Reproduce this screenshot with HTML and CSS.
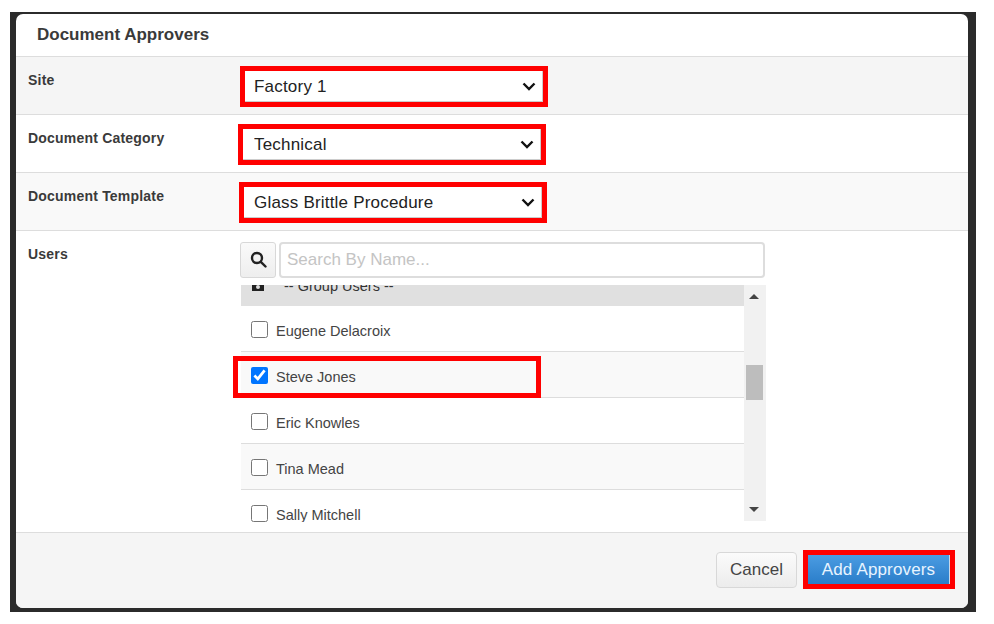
FILE: index.html
```html
<!DOCTYPE html>
<html lang="en">
<head>
  <meta charset="UTF-8" />
  <title>Document Approvers</title>
  <link rel="stylesheet" href="styles.css">
</head>
<body>
  <div class="backdrop">
    <div class="modal">
      <div class="modal-title">Document Approvers</div>

      <div class="row row-site">
        <label class="row-label">Site</label>
        <div class="red-box box-site">
          <select class="field"><option>Factory 1</option></select>
        </div>
      </div>

      <div class="row row-category">
        <label class="row-label">Document Category</label>
        <div class="red-box box-category">
          <select class="field"><option>Technical</option></select>
        </div>
      </div>

      <div class="row row-template">
        <label class="row-label">Document Template</label>
        <div class="red-box box-template">
          <select class="field"><option>Glass Brittle Procedure</option></select>
        </div>
      </div>

      <div class="row row-users">
        <label class="row-label">Users</label>
        <div class="users">
          <div class="search">
            <button class="search-btn" type="button">
              <svg width="17" height="17" viewBox="0 0 17 17" fill="none" stroke="#222" stroke-width="2.4">
                <circle cx="7" cy="7" r="5"/>
                <path d="M10.8 10.8 L15.5 15.5" stroke-linecap="round"/>
              </svg>
            </button>
            <input class="search-input" type="text" placeholder="Search By Name...">
          </div>

          <div class="list-wrap">
            <div class="list">
              <div class="list-inner">
                <div class="group-row">
                  <svg class="group-icon" width="12" height="12" viewBox="0 0 12 12"><path fill="#222" d="M0 2h4l1-2h2l1 2h4v10H0z"/><circle cx="6" cy="8" r="2" fill="#ddd"/></svg>
                  <span>-- Group Users --</span>
                </div>
                <label class="user"><input type="checkbox"><span>Eugene Delacroix</span></label>
                <label class="user alt"><input type="checkbox" checked><span>Steve Jones</span><i class="user-mark"></i></label>
                <label class="user"><input type="checkbox"><span>Eric Knowles</span></label>
                <label class="user alt"><input type="checkbox"><span>Tina Mead</span></label>
                <label class="user"><input type="checkbox"><span>Sally Mitchell</span></label>
              </div>
            </div>
            <div class="scrollbar">
              <div class="arrow-up"></div>
              <div class="thumb"></div>
              <div class="arrow-down"></div>
            </div>
          </div>
        </div>
      </div>

      <div class="modal-footer">
        <button class="btn-cancel" type="button">Cancel</button>
        <div class="red-box box-add">
          <button class="btn-add" type="button">Add Approvers</button>
        </div>
      </div>
    </div>
  </div>
</body>
</html>
```

FILE: styles.css
```css
* {
  box-sizing: border-box;
}

body {
  background-color: #fff;
  color: #333;
  font-family: 'Liberation Sans', Arial, sans-serif;
  margin: 0;
}

.backdrop {
  width: 966px;
  height: 600px;
  margin: 12px 0 0 10px;
  padding: 2px 8px 4px 6px;
  background-color: #2b2b2b;
}

.modal {
  height: 594px;
  background: #fff;
  border-radius: 7px;
  overflow: hidden;
}

.modal-title {
  height: 43px;
  padding: 11px 0 0 21px;
  font-size: 17px;
  font-weight: bold;
  color: #3a3a3a;
  border-bottom: 1px solid #ddd;
}

.row {
  display: grid;
  grid-template-columns: 224px 1fr;
  height: 58px;
  border-bottom: 1px solid #ddd;
}

.row-site {
  background-color: #f5f5f5;
}

.row-template {
  background-color: #f9f9f9;
}

.row-users {
  height: 302px;
  border-bottom: 1px solid #ddd;
}

.row-label {
  padding: 15px 0 0 12px;
  font-size: 14px;
  font-weight: bold;
  letter-spacing: 0.2px;
  color: #3a3a3a;
}

.red-box {
  border: 5px solid #f00;
}

.box-site,
.box-category,
.box-template {
  width: 308px;
  height: 41px;
  margin-top: 9px;
}

.box-category {
  margin-left: -2px;
}

.box-template {
  margin-left: -1px;
}

.field {
  display: block;
  width: 100%;
  height: 100%;
  padding: 0 0 0 9px;
  appearance: none;
  background: #fff url("data:image/svg+xml,%3Csvg xmlns='http://www.w3.org/2000/svg' width='14' height='9' viewBox='0 0 14 9'%3E%3Cpath d='M1.5 1.5 7 7l5.5-5.5' fill='none' stroke='%23111' stroke-width='2.4'/%3E%3C/svg%3E") no-repeat right 6px center;
  border: none;
  border-right: 1px solid #ccc;
  border-bottom: 1px solid #ccc;
  font-family: 'Liberation Sans', Arial, sans-serif;
  font-size: 17px;
  letter-spacing: 0.2px;
  color: #222;
}

.box-category .field {
  padding-left: 11px;
}

.box-template .field {
  padding-left: 10px;
}

.users {
  padding-top: 11px;
}

.search {
  display: flex;
  gap: 3px;
  width: 525px;
  height: 36px;
}

.search-btn {
  width: 36px;
  height: 36px;
  padding: 2px 0 0;
  background: linear-gradient(#fafafa, #eee);
  border: 1px solid #d8d8d8;
  border-radius: 3px;
}

.search-input {
  flex: 1;
  padding: 0 6px;
  background-color: #fff;
  border: 2px solid #ddd;
  border-radius: 4px;
  font-family: 'Liberation Sans', Arial, sans-serif;
  font-size: 17px;
}

.search-input::placeholder {
  color: #c4c4c4;
}

.list-wrap {
  display: flex;
  width: 525px;
  height: 236px;
  margin: 7px 0 0 1px;
}

.list {
  flex: 1;
  clip-path: inset(0 -10px -1px -10px);
}

.list-inner {
  margin-top: -18px;
}

.group-row {
  display: flex;
  gap: 20px;
  height: 39px;
  padding: 11px 0 0 11px;
  background-color: #e0e0e0;
  font-size: 14.5px;
}

.group-icon {
  margin-top: 1px;
}

.user {
  position: relative;
  display: flex;
  align-items: center;
  gap: 7px;
  height: 46px;
  padding-left: 10px;
  border-bottom: 1px solid #ddd;
  font-size: 14.5px;
  color: #444;
}

.user span {
  padding-top: 5px;
}

.user.alt {
  background-color: #f9f9f9;
}

.user input {
  width: 17px;
  height: 17px;
  margin: 1px 1px 0 0;
}

.user-mark {
  position: absolute;
  left: -8px;
  top: 4px;
  width: 308px;
  height: 42px;
  border: 5px solid #f00;
}

.scrollbar {
  position: relative;
  width: 22px;
  background-color: #f1f1f1;
}

.arrow-up,
.arrow-down {
  position: absolute;
  left: 5px;
  width: 0;
  height: 0;
  border-left: 5px solid transparent;
  border-right: 5px solid transparent;
}

.arrow-up {
  top: 9px;
  border-bottom: 5px solid #444;
}

.arrow-down {
  bottom: 9px;
  border-top: 5px solid #444;
}

.thumb {
  position: absolute;
  left: 2px;
  top: 80px;
  width: 17px;
  height: 35px;
  background-color: #bdbdbd;
}

.modal-footer {
  display: flex;
  justify-content: flex-end;
  align-items: center;
  gap: 6px;
  height: 75px;
  padding: 0 13px 2px 0;
  background-color: #f5f5f5;
}

.btn-cancel {
  width: 81px;
  height: 36px;
  background: linear-gradient(#fbfbfb, #ececec);
  border: 1px solid #d8d8d8;
  border-radius: 4px;
  font-family: 'Liberation Sans', Arial, sans-serif;
  font-size: 17px;
  color: #444;
}

.box-add {
  width: 152px;
  height: 39px;
}

.btn-add {
  display: block;
  width: 100%;
  height: 100%;
  background: linear-gradient(#4b9ce2, #2a7dc9);
  border: none;
  border-right: 1px solid #c8d8e8;
  font-family: 'Liberation Sans', Arial, sans-serif;
  font-size: 17px;
  letter-spacing: 0.15px;
  color: #e8f4ff;
}
```
